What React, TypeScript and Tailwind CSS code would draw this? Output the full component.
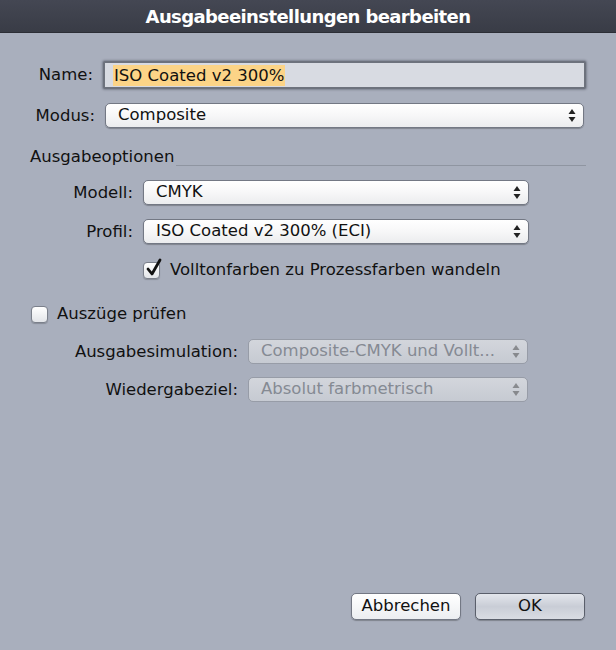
import { ReactNode } from "react";

const font = { fontFamily: '"DejaVu Sans", "Liberation Sans", sans-serif' };

function Arrows({ dim }: { dim?: boolean }) {
  return (
    <svg width="8" height="13" viewBox="0 0 8 13" className={dim ? "opacity-40" : ""}>
      <path d="M4 0 L7.5 5 L0.5 5 Z" fill="#222" />
      <path d="M4 13 L7.5 8 L0.5 8 Z" fill="#222" />
    </svg>
  );
}

function Select({ value, width, disabled }: { value: string; width: string; disabled?: boolean }) {
  return (
    <div
      className={`${width} h-[25px] flex items-center justify-between pl-3 pr-[7px] rounded-[5px] border ${
        disabled
          ? "border-[#979ca7] bg-gradient-to-b from-[#d3d6dc] to-[#c6cad2] text-[#858a93]"
          : "border-[#737884] bg-gradient-to-b from-white via-[#f7f7f8] to-[#ebecee] text-[#111] shadow-[0_1px_1px_rgba(0,0,0,0.25)]"
      }`}
    >
      <span className="text-[16.5px] leading-none whitespace-nowrap">{value}</span>
      <Arrows dim={disabled} />
    </div>
  );
}

function Row({ label, labelWidth, children }: { label: string; labelWidth: string; children: ReactNode }) {
  return (
    <div className="flex items-center">
      <span className={`${labelWidth} text-right text-[16.5px] leading-[20px] text-[#111] pr-[10px] whitespace-nowrap`}>{label}</span>
      {children}
    </div>
  );
}

function Checkbox({ checked }: { checked?: boolean }) {
  return (
    <div className="relative w-[17px] h-[17px] rounded-[4px] border border-[#7b808b] bg-gradient-to-b from-white to-[#e3e5e9] shadow-[0_1px_1px_rgba(0,0,0,0.2)]">
      {checked && (
        <svg width="18" height="20" viewBox="0 0 18 20" className="absolute left-[1px] -top-[5px]">
          <path d="M3 11 L7 16 L15 2" stroke="#111" strokeWidth="2.8" fill="none" strokeLinecap="round" strokeLinejoin="round" />
        </svg>
      )}
    </div>
  );
}

export default function App() {
  return (
    <div className="w-[616px] h-[650px] flex flex-col bg-[#a9afbd]" style={font}>
      <div className="h-[33px] flex items-center justify-center bg-gradient-to-b from-[#444753] to-[#393c46] border-b border-[#2c2e36]">
        <span className="text-white font-bold text-[18px] tracking-[-0.6px]">Ausgabeeinstellungen bearbeiten</span>
      </div>

      <div className="flex flex-col pt-[28px] pl-[30px] pr-[30px]">
        <Row label="Name:" labelWidth="w-[73px]">
          <div className="w-[483px] h-[28px] flex items-center pl-[8px] bg-[#d8dbe2] border-[2px] border-[#6d727d] rounded-[2px] shadow-[0_0_2px_1px_rgba(70,75,90,0.45)]">
            <span className="bg-[#fcd487] text-[16.5px] text-[#111] leading-[21px] px-[1px]">ISO Coated v2 300%</span>
          </div>
        </Row>
        <div className="mt-[14px]">
          <Row label="Modus:" labelWidth="w-[75px]">
            <Select value="Composite" width="w-[479px]" />
          </Row>
        </div>

        <div className="mt-[19px] flex items-end">
          <span className="text-[16.5px] text-[#111] leading-[20px]">Ausgabeoptionen</span>
          <div className="flex-1 ml-[2px] mb-[1px] border-b border-[#8f95a1]" />
        </div>

        <div className="mt-[13px] flex flex-col gap-[14px]">
          <Row label="Modell:" labelWidth="w-[113px]">
            <Select value="CMYK" width="w-[386px]" />
          </Row>
          <Row label="Profil:" labelWidth="w-[113px]">
            <Select value="ISO Coated v2 300% (ECI)" width="w-[386px]" />
          </Row>
        </div>

        <div className="mt-[16px] ml-[113px] flex items-center gap-[10px]">
          <Checkbox checked />
          <span className="text-[16.5px] leading-[20px] text-[#111]">Volltonfarben zu Prozessfarben wandeln</span>
        </div>

        <div className="mt-[24px] ml-[1px] flex items-center gap-[9px]">
          <Checkbox />
          <span className="text-[16.5px] leading-[20px] text-[#111]">Auszüge prüfen</span>
        </div>

        <div className="mt-[15px] flex flex-col gap-[13px]">
          <Row label="Ausgabesimulation:" labelWidth="w-[218px]">
            <Select value="Composite-CMYK und Vollt..." width="w-[280px]" disabled />
          </Row>
          <Row label="Wiedergabeziel:" labelWidth="w-[218px]">
            <Select value="Absolut farbmetrisch" width="w-[280px]" disabled />
          </Row>
        </div>
      </div>

      <div className="mt-auto mb-[30px] flex justify-end gap-[14px] pr-[31px]">
        <button className="w-[110px] h-[27px] rounded-[5px] border border-[#737884] bg-gradient-to-b from-white to-[#eceef1] text-[16.5px] text-[#111] shadow-[0_1px_1px_rgba(0,0,0,0.25)]">
          Abbrechen
        </button>
        <button className="w-[110px] h-[27px] rounded-[5px] border border-[#5a5f6b] bg-gradient-to-b from-[#e3e6ec] via-[#c9cdd6] to-[#d9dce3] text-[16.5px] text-[#111] shadow-[0_1px_1px_rgba(0,0,0,0.25)]">
          OK
        </button>
      </div>
    </div>
  );
}
